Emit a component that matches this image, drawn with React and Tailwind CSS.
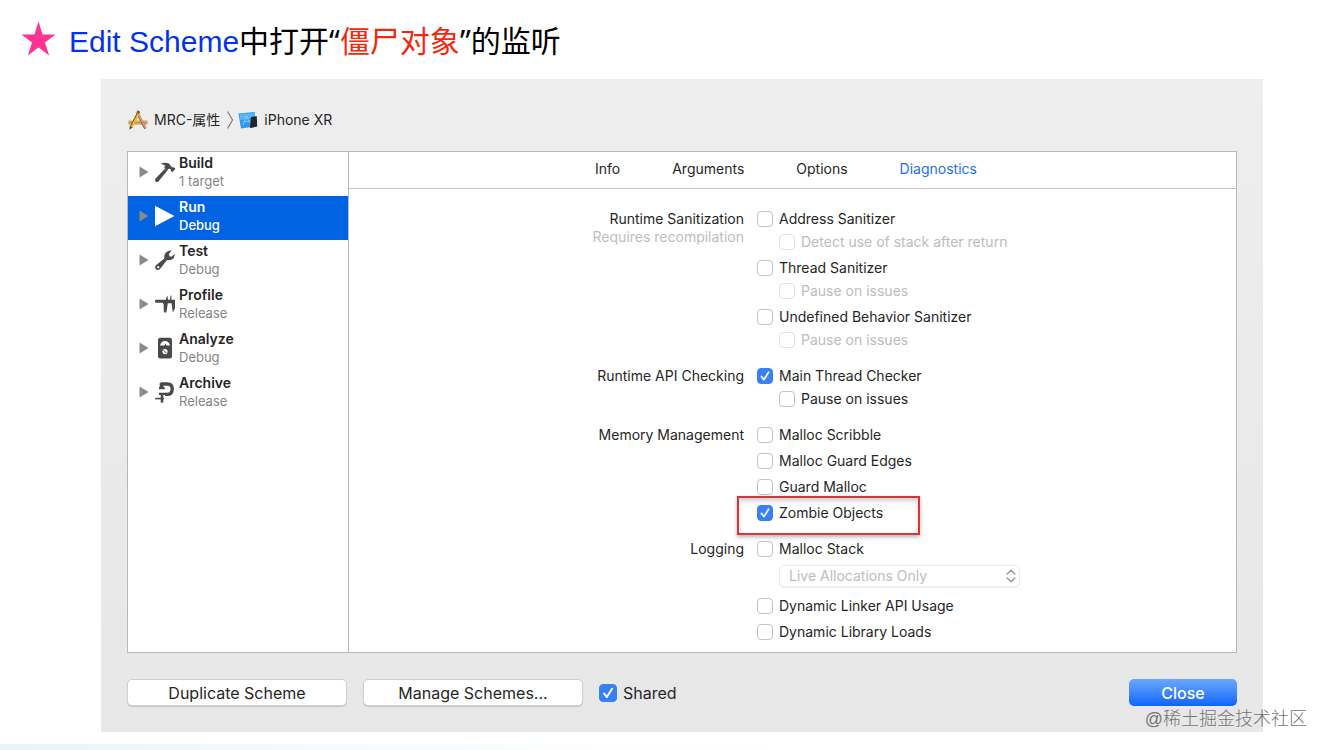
function Disclosure() {
  return (
    <svg viewBox="0 0 10 12" className="h-3 w-[10px] shrink-0" aria-hidden="true">
      <path d="M0.5 0.5 L9.5 6 L0.5 11.5Z" fill="#8a8a8a" />
    </svg>
  );
}

const icons = {
  hammer: (
    <g fill="#4a4a4a">
      <path d="M11.2 7.4 L13.4 9.4 L4.4 20.4 Q3.2 21.6 1.6 20.4 Q0.4 19.2 1.4 17.8Z" />
      <path d="M6.6 2.8 Q11 0.6 15.4 2.8 L17 5.4 L19.2 6.6 L20.4 6.4 L21.4 8 L18.4 11 L17 10.2 L16.8 8.6 L15 7.6 L13.2 9.4 L10.2 6.8 L11.4 4.8 Q9 3.2 6.6 2.8Z" />
    </g>
  ),
  play: <path d="M1 0.8 L20.5 11 L1 21.2Z" fill="#fff" />,
  wrench: (
    <path
      d="M17.6 1.6 L14.8 5 L15.6 7.4 L18 7.6 L20.6 4.8 Q21 8.6 18 10.4 Q15.4 11.6 13 11 L6.8 19 Q4.8 22 2.2 20.4 Q0 18.2 2.2 16 L10.4 9.4 Q9.8 6 12 3.6 Q14.4 1.2 17.6 1.6Z M4.2 17 a1.1 1.1 0 1 0 0.02 0Z"
      fill="#4a4a4a"
      fillRule="evenodd"
    />
  ),
  caliper: (
    <path
      d="M1.4 6.8 H12 V5.4 L13.4 2.4 L14 6.8 H16 L16.4 3 L17.4 2.2 V6.8 H21 V15.4 L18.8 19.4 L17.6 10.2 H13.8 L12.6 18.4 L11.2 20 L9.8 18.6 L9.6 11 L8.4 9.8 H1.4 Q0.4 8.2 1.4 6.8Z"
      fill="#4a4a4a"
    />
  ),
  meter: (
    <g>
      <rect x="4" y="0.8" width="14" height="20.6" rx="2.2" fill="#4a4a4a" />
      <path d="M6 8.6 Q7 4 11 4 Q15 4 16 8.6 H12.6 L11.4 6.4 L10.6 8.6Z" fill="#fff" />
      <circle cx="11" cy="14.6" r="2.6" fill="#fff" />
      <path d="M9.6 13.2 L12.4 16" stroke="#4a4a4a" strokeWidth="1" />
    </g>
  ),
  clamp: (
    <g fill="none" stroke="#4a4a4a">
      <path d="M7 3 H13.6 Q18.2 3 18.2 8 Q18.2 13.4 13.4 13.4 H11" strokeWidth="3.4" />
      <path d="M7.6 1.8 V7" strokeWidth="3.8" />
      <path d="M5 7.2 H10.6 M5 12.8 H12" strokeWidth="2.2" />
      <path d="M8 12 V21.6" strokeWidth="2.6" />
      <path d="M1.2 17.6 H10" strokeWidth="1.6" />
    </g>
  ),
};

const actions = [
  { name: "Build", detail: "1 target", icon: "hammer" },
  { name: "Run", detail: "Debug", icon: "play", selected: true },
  { name: "Test", detail: "Debug", icon: "wrench" },
  { name: "Profile", detail: "Release", icon: "caliper" },
  { name: "Analyze", detail: "Debug", icon: "meter" },
  { name: "Archive", detail: "Release", icon: "clamp" },
];

function Sidebar() {
  return (
    <nav className="w-[221px] shrink-0 border-r border-[#b9b9b9]">
      <ul>
        {actions.map((a) => (
          <li key={a.name}>
            <button
              type="button"
              className={
                "flex h-11 w-full items-center pb-1 pl-[11px] text-left " +
                (a.selected ? "bg-[#0063e1] text-white" : "text-[#262626]")
              }
            >
              <Disclosure />
              <svg viewBox="0 0 22 22" className="ml-[5px] size-[22px] shrink-0" aria-hidden="true">
                {icons[a.icon]}
              </svg>
              <span className="ml-[3px] flex flex-col">
                <span className="text-sm leading-[18px] font-semibold">{a.name}</span>
                <span className={"text-[13px] leading-[18px] " + (a.selected ? "font-medium text-white" : "text-[#858585]")}>
                  {a.detail}
                </span>
              </span>
            </button>
          </li>
        ))}
      </ul>
    </nav>
  );
}

function Check({ label, checked = false, disabled = false, large = false }) {
  return (
    <label className={"flex items-center " + (disabled ? "text-[#bdbdbd]" : "text-[#262626]")}>
      <span className={"relative block shrink-0 " + (large ? "size-[18px]" : "size-4")}>
        <input
          type="checkbox"
          defaultChecked={checked}
          disabled={disabled}
          className={
            "peer block size-full appearance-none rounded-[4px] border bg-white checked:border-[#3880f6] checked:bg-[#3880f6] " +
            (disabled ? "border-[#e2e2e2]" : "border-[#c2c2c2]")
          }
        />
        <svg
          viewBox="0 0 16 16"
          className="pointer-events-none absolute inset-0 hidden size-full peer-checked:block"
          aria-hidden="true"
        >
          <path d="M4.4 8.4 L7 11.6 L11.6 4.2" fill="none" stroke="#fff" strokeWidth="1.7" strokeLinecap="round" strokeLinejoin="round" />
        </svg>
      </span>
      <span className={large ? "ml-[6px] text-base" : "ml-[6px] text-sm"}>{label}</span>
    </label>
  );
}

function Row({ sub = false, highlighted = false, ...check }) {
  return (
    <div className={"relative flex w-fit items-center " + (sub ? "ml-[22px] h-[23px] pb-[3px]" : "h-[26px]")}>
      <Check {...check} />
      {highlighted && (
        <span className="pointer-events-none absolute -top-1 -left-5 h-[39px] w-[183px] border-2 border-[#d8343b] shadow-[0_2px_4px_rgba(0,0,0,0.3),inset_0_3px_5px_rgba(0,0,0,0.18)]" />
      )}
    </div>
  );
}

function Group({ title, note, children }) {
  return (
    <section className="grid grid-cols-[46fr_54fr]">
      <div className="pt-1 pr-[13px] text-right text-sm leading-[18px] text-[#262626]">
        <h2>{title}</h2>
        {note && <p className="text-[#bdbdbd]">{note}</p>}
      </div>
      <div>{children}</div>
    </section>
  );
}

function Diagnostics() {
  return (
    <div className="flex min-w-0 flex-1 flex-col">
      <div className="flex h-[37px] items-center gap-[52px] border-b border-[#c4c4c4] pb-[3px] pl-[246px] text-sm text-[#262626]" role="tablist">
        <button type="button" role="tab">Info</button>
        <button type="button" role="tab">Arguments</button>
        <button type="button" role="tab">Options</button>
        <button type="button" role="tab" aria-selected="true" className="text-[#1a73e8]">Diagnostics</button>
      </div>
      <div className="flex flex-col gap-[10px] pt-[17px] pb-[7px]">
        <Group title="Runtime Sanitization" note="Requires recompilation">
          <Row label="Address Sanitizer" />
          <Row sub disabled label="Detect use of stack after return" />
          <Row label="Thread Sanitizer" />
          <Row sub disabled label="Pause on issues" />
          <Row label="Undefined Behavior Sanitizer" />
          <Row sub disabled label="Pause on issues" />
        </Group>
        <Group title="Runtime API Checking">
          <Row checked label="Main Thread Checker" />
          <Row sub label="Pause on issues" />
        </Group>
        <Group title="Memory Management">
          <Row label="Malloc Scribble" />
          <Row label="Malloc Guard Edges" />
          <Row label="Guard Malloc" />
          <Row checked highlighted label="Zombie Objects" />
        </Group>
        <Group title="Logging">
          <Row label="Malloc Stack" />
          <div className="ml-[22px] flex h-[31px] items-center pb-[3px]">
            <div className="relative w-[241px]">
              <select
                disabled
                aria-label="Malloc stack recording"
                className="block h-[22px] w-full appearance-none rounded-[5px] border border-[#ebebeb] bg-white pl-[9px] text-sm leading-5 text-[#bdbdbd] opacity-100 shadow-[0_1px_1px_rgba(0,0,0,0.06)]"
              >
                <option>Live Allocations Only</option>
              </select>
              <svg viewBox="0 0 10 14" className="pointer-events-none absolute top-1 right-1 h-[14px] w-[10px]" aria-hidden="true">
                <path d="M1.2 5 L5 1.2 L8.8 5 M1.2 9 L5 12.8 L8.8 9" fill="none" stroke="#999" strokeWidth="1.5" strokeLinecap="round" strokeLinejoin="round" />
              </svg>
            </div>
          </div>
          <Row label="Dynamic Linker API Usage" />
          <Row label="Dynamic Library Loads" />
        </Group>
      </div>
    </div>
  );
}

function ProjectIcon() {
  return (
    <svg viewBox="0 0 20 20" className="size-5" aria-hidden="true">
      <path d="M0.5 10.4 H19.5 V14.8 H0.5Z" fill="#e0ab72" />
      <path d="M0.5 12.6 H19.5" stroke="#b97d46" strokeWidth="0.8" />
      <path d="M9.4 3 L17.4 18.6" stroke="#a9603c" strokeWidth="2.6" />
      <path d="M9.8 3 L17.8 18.6" stroke="#e0cdb4" strokeWidth="0.9" />
      <path d="M10.4 3.2 L3.2 17" stroke="#e9bd22" strokeWidth="2.8" />
      <path d="M9.4 2.8 L2.4 16.4" stroke="#6c4d1c" strokeWidth="0.9" />
      <path d="M9.4 0.2 L12.2 1.8 L11 4.2 L8.4 2.8Z" fill="#b5453e" />
      <path d="M1.8 16 L4.6 17.4 L1.4 19.8Z" fill="#4d4337" />
    </svg>
  );
}

function DeviceIcon() {
  return (
    <svg viewBox="0 0 20 20" className="size-5" aria-hidden="true">
      <path d="M0.4 3.4 L16.6 2 L17 16.6 L3 18.6Z" fill="#2f98ee" />
      <path d="M1.4 4.2 L15.8 3 L16 8 L2 10Z" fill="#55b6fa" />
      <path d="M5 15 L8.6 6 L11.6 13 M4.6 12 L12 10.8" stroke="#8fd0ff" strokeWidth="0.8" fill="none" />
      <path d="M13 7 L18.8 6.2 L19.2 16.6 L12 18.2Z" fill="#22252c" />
    </svg>
  );
}

export default function App() {
  return (
    <main className="relative flex min-h-screen flex-col overflow-hidden bg-white font-[Inter,'Noto_Sans_CJK_SC',sans-serif]">
      <h1 className="flex h-[79px] items-center gap-[13px] pt-[3px] pl-[21px] font-['Liberation_Sans','Noto_Sans_CJK_SC',sans-serif] text-[30px] leading-10 text-black">
        <svg viewBox="0 0 35 40" className="h-10 w-[35px] shrink-0" aria-hidden="true">
          <path d="M17.5 0.6 L21.6 13.6 H34.6 L24 21.4 L28.2 34.6 L17.5 26.6 L6.8 34.6 L11 21.4 L0.4 13.6 H13.4Z" fill="#ff3393" />
        </svg>
        <span>
          <span className="text-[#0432e8]">Edit Scheme</span>中打开
          <span className="font-['Noto_Sans',sans-serif]">“</span>
          <span className="text-[#f5270b]">僵尸对象</span>
          <span className="font-['Noto_Sans',sans-serif]">”</span>的监听
        </span>
      </h1>

      <div className="mr-[65px] ml-[101px] bg-linear-to-b from-[#eeeeee] to-[#e7e7e7] px-[26px] pb-[26px]">
        <header className="flex h-[72px] items-center pt-[9px] pl-px text-sm text-[#262626]">
          <ProjectIcon />
          <span className="ml-[6px]">MRC-属性</span>
          <svg viewBox="0 0 8 20" className="ml-[6px] h-5 w-2" aria-hidden="true">
            <path d="M1.5 1.5 L6.5 10 L1.5 18.5" fill="none" stroke="#7c7c7c" strokeWidth="1.2" />
          </svg>
          <span className="ml-1 flex"><DeviceIcon /></span>
          <span className="ml-[6px]">iPhone XR</span>
        </header>

        <div className="flex border border-[#b9b9b9] bg-white">
          <Sidebar />
          <Diagnostics />
        </div>

        <footer className="mt-[26px] flex items-center text-[#262626]">
          <button type="button" className="h-[27px] w-[220px] rounded-[5px] border border-[#cfcfcf] bg-white text-base leading-6 shadow-[0_1px_1px_rgba(0,0,0,0.15)]">
            Duplicate Scheme
          </button>
          <button type="button" className="ml-4 h-[27px] w-[220px] rounded-[5px] border border-[#cfcfcf] bg-white text-base leading-6 shadow-[0_1px_1px_rgba(0,0,0,0.15)]">
            Manage Schemes...
          </button>
          <div className="ml-4">
            <Check large checked label="Shared" />
          </div>
          <button type="button" className="ml-auto h-[27px] w-[108px] rounded-[5px] bg-linear-to-b from-[#6aa7fb] to-[#0a63fc] text-base leading-6 font-medium text-white">
            Close
          </button>
        </footer>
      </div>

      <div className="mt-auto h-[6px] bg-linear-to-r from-[#e6f4fa] via-[#f8fcfe] via-30% to-white to-60%" />

      <p className="pointer-events-none absolute right-[21px] bottom-[17px] font-['Liberation_Sans','Noto_Sans_CJK_SC',sans-serif] text-lg leading-7 font-light text-[#757575]">
        @稀土掘金技术社区
      </p>
    </main>
  );
}
